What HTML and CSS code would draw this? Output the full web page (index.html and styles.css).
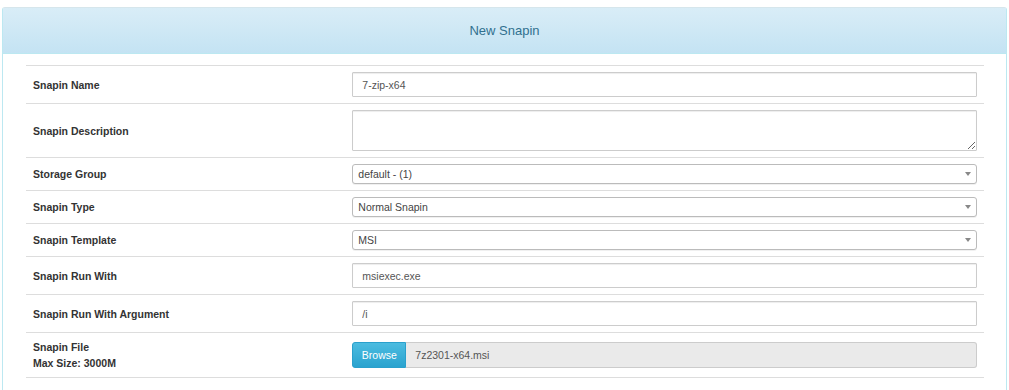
FILE: index.html
```html
<!DOCTYPE html>
<html lang="en">
<head>
  <meta charset="UTF-8">
  <title>New Snapin</title>
  <link rel="stylesheet" href="styles.css">
</head>
<body>

<div class="page">
  <div class="panel">
    <div class="panel-heading">New Snapin</div>
    <div class="panel-body">
      <form onsubmit="return false;">
        <table class="form-table">
          <tr>
            <td class="label">Snapin Name</td>
            <td><input type="text" class="field" value="7-zip-x64"></td>
          </tr>
          <tr>
            <td class="label">Snapin Description</td>
            <td><textarea class="field area"></textarea></td>
          </tr>
          <tr>
            <td class="label">Storage Group</td>
            <td><div class="select-wrap"><select class="select"><option>default - (1)</option></select></div></td>
          </tr>
          <tr>
            <td class="label">Snapin Type</td>
            <td><div class="select-wrap"><select class="select"><option>Normal Snapin</option></select></div></td>
          </tr>
          <tr>
            <td class="label">Snapin Template</td>
            <td><div class="select-wrap"><select class="select"><option>MSI</option></select></div></td>
          </tr>
          <tr>
            <td class="label">Snapin Run With</td>
            <td><input type="text" class="field" value="msiexec.exe"></td>
          </tr>
          <tr>
            <td class="label">Snapin Run With Argument</td>
            <td><input type="text" class="field" value="/i"></td>
          </tr>
          <tr class="last">
            <td class="label two-line">Snapin File<br>Max Size: 3000M</td>
            <td>
              <div class="file-group">
                <span class="btn-browse">Browse</span>
                <span class="file-name">7z2301-x64.msi</span>
              </div>
            </td>
          </tr>
        </table>
      </form>
    </div>
  </div>
</div>

</body>
</html>
```

FILE: styles.css
```css
* { box-sizing: border-box; }
body {
  margin: 0;
  font-family: 'Liberation Sans', Arial, sans-serif;
  font-size: 10.5px;
  color: #333;
  background: #fff;
}
.page {
  padding: 7px 2px 0 2px;
}
.panel {
  border: 1px solid #bce8f1;
  border-top-color: #d6e6ec;
  border-radius: 3px 3px 0 0;
  height: 390px;
}
.panel-heading {
  height: 46px;
  line-height: 45px;
  text-align: center;
  font-size: 13px;
  color: #31708f;
  background: linear-gradient(to bottom, #d9edf7, #c4e3f3);
  border-bottom: 1px solid #bce8f1;
}
.panel-body {
  padding: 11px 22px 0 23px;
}
.form-table {
  width: 100%;
  border-collapse: collapse;
}
.form-table td {
  border-top: 1px solid #ddd;
  padding: 6px 7px;
  vertical-align: middle;
}
.form-table tr.last td {
  border-bottom: 1px solid #ddd;
}
.form-table td.label {
  width: 33.333%;
  font-weight: bold;
  color: #333;
}
.form-table td.two-line {
  line-height: 16px;
}
.field {
  display: block;
  width: 100%;
  height: 25px;
  padding: 0 9px;
  border: 1px solid #ccc;
  border-radius: 1px;
  box-shadow: inset 0 1px 1px rgba(0, 0, 0, 0.075);
  font-family: inherit;
  font-size: 10.5px;
  color: #555;
  background: #fff;
  outline: none;
}
.field.area {
  height: 41px;
  resize: vertical;
}
.select-wrap {
  position: relative;
}
.select {
  display: block;
  width: 100%;
  height: 20px;
  padding: 0 20px 0 5px;
  border: 1px solid #bbb;
  border-radius: 3px;
  box-shadow: 0 1px 0 rgba(0, 0, 0, 0.06);
  font-family: inherit;
  font-size: 10.5px;
  color: #444;
  background: #fff;
  -webkit-appearance: none;
  appearance: none;
  outline: none;
}
.select-wrap::after {
  content: "";
  position: absolute;
  right: 6px;
  top: 8px;
  border-left: 3px solid transparent;
  border-right: 3px solid transparent;
  border-top: 4px solid #888;
}
.file-group {
  display: flex;
  height: 26px;
}
.btn-browse {
  width: 54px;
  display: flex;
  align-items: center;
  justify-content: center;
  color: #fff;
  background: linear-gradient(to bottom, #4cbce0, #2aa3cf);
  border: 1px solid #2aa0cc;
  border-radius: 3px 0 0 3px;
}
.file-name {
  flex: 1;
  display: flex;
  align-items: center;
  padding-left: 9px;
  color: #555;
  background: #eaeaea;
  border: 1px solid #ccc;
  border-left: none;
  border-radius: 0 3px 3px 0;
}
```
